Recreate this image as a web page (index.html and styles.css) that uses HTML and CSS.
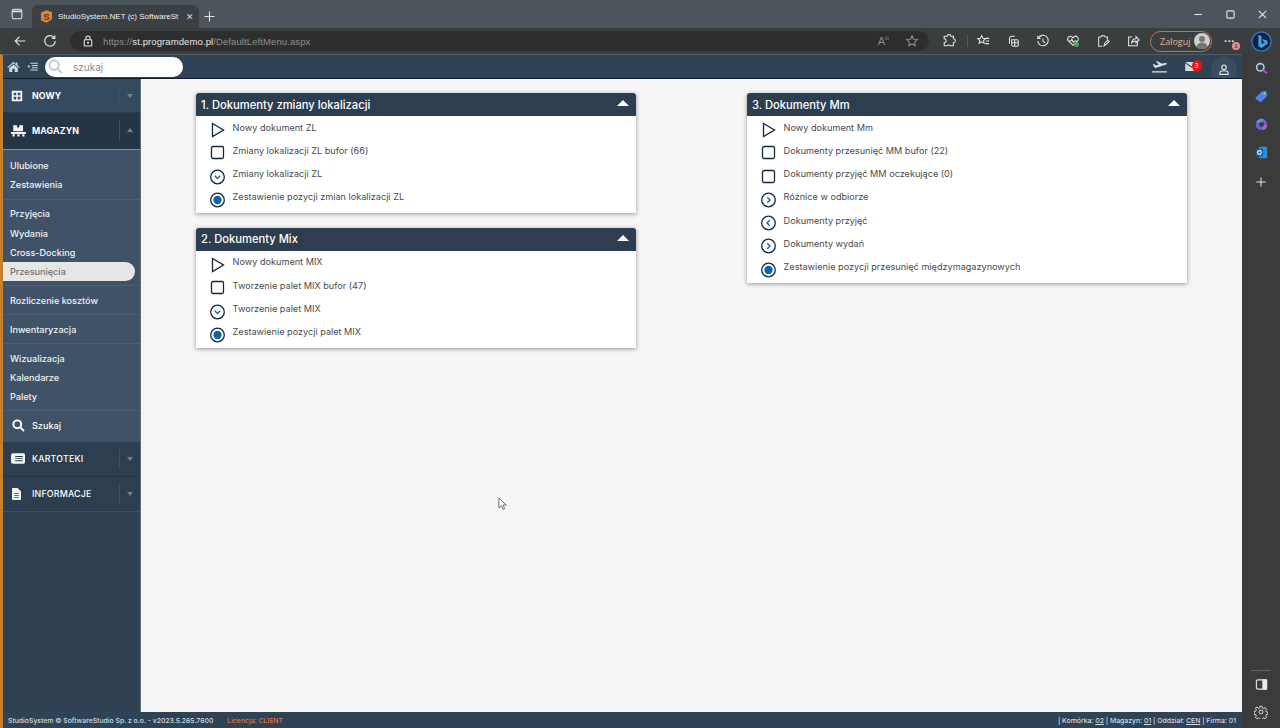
FILE: index.html
```html
<!DOCTYPE html>
<html lang="pl">
<head>
<meta charset="utf-8">
<title>StudioSystem.NET</title>
<link rel="stylesheet" href="styles.css">
</head>
<body>
<div class="tabstrip">
  <svg class="ic tabside" viewBox="0 0 16 16"><rect x="2.500" y="2.500" width="11" height="11" rx="2"/><path class="tabtop" d="M3 5h10"/></svg>
  <div class="tab">
    <svg class="favicon" viewBox="0 0 14 16"><path d="M7 0l7 2.500v9L7 16 0 13V3z" fill="#e8812c"/><text x="7" y="12.700" text-anchor="middle" class="favs">S</text></svg>
    <span class="tabtitle">StudioSystem.NET (c) SoftwareSt</span>
    <span class="tabx">✕</span>
  </div>
  <svg class="ic plus" viewBox="0 0 12 12"><path d="M6 .5v11M.5 6h11"/></svg>
  <div class="winctl">
    <svg class="ic wc" viewBox="0 0 12 12"><path d="M1.500 6h8"/></svg>
    <svg class="ic wc" viewBox="0 0 12 12"><rect x="2" y="2" width="8" height="8" rx="1.500"/></svg>
    <svg class="ic wc" viewBox="0 0 12 12"><path d="M2 2l8 8M10 2l-8 8"/></svg>
  </div>
</div>
<div class="toolbar">
  <svg class="ic nav" viewBox="0 0 16 16"><path d="M14 8H2.500M7.500 3l-5 5 5 5"/></svg>
  <svg class="ic nav reload" viewBox="0 0 16 16"><path d="M13 4.500A6 6 0 1 0 14 8M13.500 1.500v3.500H10"/></svg>
  <div class="urlbar">
    <svg class="lock" viewBox="0 0 12 14"><path d="M3.500 5.500V3.500a2.500 2.500 0 0 1 5 0v2" fill="none" stroke="#e8e8e8" stroke-width="1.300"/><rect x="1.500" y="5.500" width="9" height="7.500" rx="1" fill="none" stroke="#e8e8e8" stroke-width="1.300"/><rect x="4.800" y="8.300" width="2.400" height="1.800" fill="#e8e8e8"/></svg>
    <span class="url"><span class="dim">https://</span><b>st.programdemo.pl</b><span class="dim">/DefaultLeftMenu.aspx</span></span>
    <span class="urlend">
      <span class="aa">A<sup>ᕱ</sup></span>
      <svg class="ic tool muted" viewBox="0 0 16 16"><path d="M8 2l1.800 3.900 4.200.5-3.100 2.900.8 4.200L8 11.400l-3.700 2.100.8-4.200L2 6.400l4.200-.5z"/></svg>
    </span>
  </div>
  <svg class="ic tool first" viewBox="0 0 16 16"><path d="M6 2.500a2 2 0 0 1 4 0h3v3a2 2 0 0 1 0 4.500v3.500H9.500a2 2 0 0 0-3.500 0H2.500V10a2 2 0 0 0 0-4.500v-3z"/></svg>
  <span class="tooldiv"></span>
  <svg class="ic tool" viewBox="0 0 16 16"><path d="M6.500 2l1.400 3 3.100.4-2.300 2.100.6 3.100-2.800-1.600-2.800 1.600.6-3.100L2 5.400 5.100 5zM11 5h4M11.500 8H15M10.500 11H15"/></svg>
  <svg class="ic tool" viewBox="0 0 16 16"><path d="M4 11V5a2.500 2.500 0 0 1 2.500-2.500H10M6.500 6.500h6a1.500 1.500 0 0 1 1.500 1.500v4.500a1.500 1.500 0 0 1-1.500 1.500h-4A2 2 0 0 1 6.500 12zM10 6.500V14M6.500 10H14"/></svg>
  <svg class="ic tool" viewBox="0 0 16 16"><path d="M2.500 5A6 6 0 1 1 2 8M2 2v3.200h3.200M8 5v3.500l2.500 1.500"/></svg>
  <svg class="ic tool" viewBox="0 0 16 16"><path d="M8 13L2.800 7.800a3 3 0 0 1 4.400-4.300L8 4.300l.8-.8a3 3 0 0 1 4.400 4.300zM3 8h2.500l1.200-2 1.600 3.500L9.500 8H12"/><circle class="okdot" cx="12" cy="12" r="2.800"/></svg>
  <svg class="ic tool" viewBox="0 0 16 16"><path d="M3 3.500h2.500l1-1.500h3l1 1.500H13v3M3 3.500V14h4M9 13.500l1-3 3.500-3.500 1.500 1.500-3.500 3.500z"/></svg>
  <svg class="ic tool" viewBox="0 0 16 16"><path d="M7 3.500H3v10h10V9.500M6.500 10c.5-3 2.500-4.500 5-4.500V3l3.500 3.700-3.500 3.300V8c-2 0-3.500.6-5 2z"/></svg>
  <div class="login"><span>Zaloguj</span><svg class="avatar" viewBox="0 0 16 16"><circle cx="8" cy="8" r="8" fill="#cfcfcf"/><circle cx="8" cy="6" r="3" fill="#777"/><path d="M2.500 14c.5-3.500 3-4.500 5.500-4.500s5 1 5.500 4.500a8 8 0 0 1-11 0z" fill="#777"/></svg></div>
  <div class="more"><span>···</span><i>1</i></div>
  <svg class="bing" viewBox="0 0 24 24"><circle cx="12" cy="12" r="11" fill="#10243f" stroke="#3a78c2" stroke-width="1.500"/><path d="M8.500 4.500l3.500 1.200v9.500l4-2.300-2-1-1.100-2.900 6 2.100v3.400L12 19.500l-3.500-2z" fill="#3fa3e8"/></svg>
</div>
<div class="frame">
  <div class="app">
    <header class="topbar">
      <svg class="homeic" viewBox="0 0 16 14"><path d="M8 1L0 8l1 1 7-6 7 6 1-1-3-2.600V2h-2v1.700zM2.500 9v5h4V10h3v4h4V9L8 4.300z"/></svg>
      <svg class="listic" viewBox="0 0 14 12"><path d="M4 1h10v1.400H4zM6 4h8v1.400H6zM6 7h8v1.400H6zM4 10h10v1.400H4zM0 5.700L3 3.500v4.400z"/></svg>
      <div class="search">
        <svg class="searchic" viewBox="0 0 16 16"><circle cx="6.500" cy="6.500" r="5"/><path d="M10.500 10.500l4.500 4.500"/></svg>
        <span>szukaj</span>
      </div>
      <div class="topright">
        <svg class="planeic" viewBox="0 0 16 13"><path d="M0 11.200h16v1.300H0zM2 6.200L.8 3.600l1.300-.3 2 1.500 3.200-.9L4 .6 5.700.2l5 2.700 3.100-.8c1-.2 2 .1 2.200.7.100.6-.5 1-1.400 1.300L3.500 7.500z"/></svg>
        <div class="mail"><svg class="mailic" viewBox="0 0 14 10"><path d="M0 0h14L7 5zM0 1.500V10h14V1.500L7 6.500z"/></svg><i>3</i></div>
        <div class="usercirc"><svg class="ic userm" viewBox="0 0 16 16"><circle cx="8" cy="5" r="3"/><path d="M2.500 14.500v-2c0-1.500 1.200-2.500 2.500-2.500h6c1.300 0 2.500 1 2.500 2.500v2z"/></svg></div>
      </div>
    </header>
    <div class="main">
      <nav class="sidebar">
        <div class="head">
          <svg class="hic" viewBox="0 0 16 16"><path fill-rule="evenodd" d="M2 1h12a1 1 0 0 1 1 1v12a1 1 0 0 1-1 1H2a1 1 0 0 1-1-1V2a1 1 0 0 1 1-1zm1.500 2.500v3.500h3.500V3.500zm5.500 0v3.500h3.500V3.500zM3.500 9v3.500h3.500V9zM9 9v3.500h3.500V9z"/></svg>
          <span class="hlabel">NOWY</span><span class="caret"><s class="down"></s></span>
        </div>
        <div class="head open">
          <svg class="hic wide" viewBox="0 0 20 16"><path d="M3 1h5v3h3V1h5v8H3zM0 10h20v2.500H0zM2 13h3v3H2zM8.500 13h3v3h-3zM15 13h3v3h-3z"/></svg>
          <span class="hlabel">MAGAZYN</span><span class="caret"><s class="up"></s></span>
        </div>
        <div class="group">
          <a>Ulubione</a><a>Zestawienia</a>
        </div>
        <div class="group">
          <a>Przyjęcia</a><a>Wydania</a><a>Cross-Docking</a><a class="active">Przesunięcia</a>
        </div>
        <div class="group"><a>Rozliczenie kosztów</a></div>
        <div class="group"><a>Inwentaryzacja</a></div>
        <div class="group"><a>Wizualizacja</a><a>Kalendarze</a><a>Palety</a></div>
        <div class="find">
          <svg class="findic" viewBox="0 0 16 16"><circle cx="6.500" cy="6.500" r="4.800"/><path d="M10.500 10.500l4.300 4.300"/></svg>
          <span>Szukaj</span>
        </div>
        <div class="head dark">
          <svg class="hic wide kart" viewBox="0 0 20 15"><path fill-rule="evenodd" d="M3 0h15a2 2 0 0 1 2 2v11a2 2 0 0 1-2 2H3a3 3 0 0 1-3-3V3a3 3 0 0 1 3-3zm3 4v1.300h11V4zm0 3v1.300h11V7zm0 3v1.300h11V10z"/></svg>
          <span class="hlabel reg">KARTOTEKI</span><span class="caret"><s class="down"></s></span>
        </div>
        <div class="head dark">
          <svg class="hic doc" viewBox="0 0 12 16"><path fill-rule="evenodd" d="M0 1a1 1 0 0 1 1-1h6.500L12 4.500V15a1 1 0 0 1-1 1H1a1 1 0 0 1-1-1zm3 6v1h6V7zm0 2.500v1h6v-1zm0 2.500v1h6v-1z"/></svg>
          <span class="hlabel reg">INFORMACJE</span><span class="caret"><s class="down"></s></span>
        </div>
      </nav>
      <main class="content">
        <div class="col">
          <section class="panel">
            <h2><span>1. Dokumenty zmiany lokalizacji</span><s class="tri"></s></h2>
            <ul>
              <li><svg class="pi" viewBox="0 0 16 16"><path d="M2.500 1.500L13.500 8 2.500 14.500z"/></svg>Nowy dokument ZL</li>
              <li><svg class="pi" viewBox="0 0 16 16"><rect x="1.500" y="1.500" width="12" height="12" rx="1.500"/></svg>Zmiany lokalizacji ZL bufor (66)</li>
              <li><svg class="pi" viewBox="0 0 16 16"><circle cx="7.500" cy="8" r="6.800"/><path class="blue" d="M4.800 6.800l2.700 2.700 2.700-2.700"/></svg>Zmiany lokalizacji ZL</li>
              <li><svg class="pi" viewBox="0 0 16 16"><circle cx="7.500" cy="8" r="6.800"/><circle class="dot" cx="7.500" cy="8" r="4.200"/></svg>Zestawienie pozycji zmian lokalizacji ZL</li>
            </ul>
          </section>
          <section class="panel">
            <h2><span>2. Dokumenty Mix</span><s class="tri"></s></h2>
            <ul>
              <li><svg class="pi" viewBox="0 0 16 16"><path d="M2.500 1.500L13.500 8 2.500 14.500z"/></svg>Nowy dokument MIX</li>
              <li><svg class="pi" viewBox="0 0 16 16"><rect x="1.500" y="1.500" width="12" height="12" rx="1.500"/></svg>Tworzenie palet MIX bufor (47)</li>
              <li><svg class="pi" viewBox="0 0 16 16"><circle cx="7.500" cy="8" r="6.800"/><path class="blue" d="M4.800 6.800l2.700 2.700 2.700-2.700"/></svg>Tworzenie palet MIX</li>
              <li><svg class="pi" viewBox="0 0 16 16"><circle cx="7.500" cy="8" r="6.800"/><circle class="dot" cx="7.500" cy="8" r="4.200"/></svg>Zestawienie pozycji palet MIX</li>
            </ul>
          </section>
        </div>
        <div class="col">
          <section class="panel">
            <h2><span>3. Dokumenty Mm</span><s class="tri"></s></h2>
            <ul>
              <li><svg class="pi" viewBox="0 0 16 16"><path d="M2.500 1.500L13.500 8 2.500 14.500z"/></svg>Nowy dokument Mm</li>
              <li><svg class="pi" viewBox="0 0 16 16"><rect x="1.500" y="1.500" width="12" height="12" rx="1.500"/></svg>Dokumenty przesunięć MM bufor (22)</li>
              <li><svg class="pi" viewBox="0 0 16 16"><rect x="1.500" y="1.500" width="12" height="12" rx="1.500"/></svg>Dokumenty przyjęć MM oczekujące (0)</li>
              <li><svg class="pi" viewBox="0 0 16 16"><circle cx="7.500" cy="8" r="6.800"/><path class="blue" d="M6.300 5.300L9 8l-2.700 2.700"/></svg>Różnice w odbiorze</li>
              <li><svg class="pi" viewBox="0 0 16 16"><circle cx="7.500" cy="8" r="6.800"/><path class="blue" d="M8.700 5.300L6 8l2.700 2.700"/></svg>Dokumenty przyjęć</li>
              <li><svg class="pi" viewBox="0 0 16 16"><circle cx="7.500" cy="8" r="6.800"/><path class="blue" d="M6.300 5.300L9 8l-2.700 2.700"/></svg>Dokumenty wydań</li>
              <li><svg class="pi" viewBox="0 0 16 16"><circle cx="7.500" cy="8" r="6.800"/><circle class="dot" cx="7.500" cy="8" r="4.200"/></svg>Zestawienie pozycji przesunięć międzymagazynowych</li>
            </ul>
          </section>
        </div>
        <svg class="cursor" viewBox="0 0 12 16"><path d="M1 1v11.500l3-2.500 2 4.500 2-1-2-4.300h4z"/></svg>
      </main>
    </div>
    <footer class="status">
      <span class="copy">StudioSystem © SoftwareStudio Sp. z o.o. - v2023.5.265.7600</span>
      <span class="lic">Licencja: CLIENT</span>
      <span class="info">| Komórka: <u>02</u> | Magazyn: <u>01</u> | Oddział: <u>CEN</u> | Firma: 01</span>
    </footer>
  </div>
  <aside class="edge">
    <svg class="eic" viewBox="0 0 16 16"><circle cx="6.500" cy="6.500" r="4.500" fill="none" stroke="#a9cbe6" stroke-width="2"/><path d="M10 10l5 4" stroke="#a24fc4" stroke-width="2.500" fill="none"/></svg>
    <svg class="eic" viewBox="0 0 16 16"><path d="M1 9l7-7 6-1 1 6-7 7.500a1.500 1.500 0 0 1-2 0L1 11a1.500 1.500 0 0 1 0-2z" fill="#4d82e8"/><circle cx="11.500" cy="4.500" r="1.300" fill="#d9c27a"/></svg>
    <svg class="eic" viewBox="0 0 16 16"><circle cx="8" cy="8" r="7" fill="#6d5fd6"/><path d="M1.500 5a7 7 0 0 1 9-3.500L8 8z" fill="#4f9be8"/><path d="M10 15a7 7 0 0 0 5-6L9 9z" fill="#c25bc4"/><circle cx="8" cy="8" r="3" fill="#3b3b3b"/></svg>
    <svg class="eic" viewBox="0 0 16 16"><rect x="5" y="1" width="10" height="14" rx="1" fill="#2b8fd8"/><rect x="1" y="3.500" width="9" height="9" rx="1" fill="#0f62ab"/><circle cx="5.500" cy="8" r="2.300" fill="none" stroke="#fff" stroke-width="1.300"/></svg>
    <svg class="ic eplus" viewBox="0 0 12 12"><path d="M6 .5v11M.5 6h11"/></svg>
    <span class="espace"></span>
    <span class="erule"></span>
    <svg class="ic eside" viewBox="0 0 14 14"><rect x="1.500" y="2" width="11" height="10" rx="1.500"/><rect class="fillw" x="8.500" y="2" width="4" height="10"/></svg>
    <svg class="ic egear" viewBox="0 0 16 16"><circle cx="8" cy="8" r="2.300"/><path d="M6.800 1h2.400l.4 2 1.400.6 1.700-1.100 1.700 1.700-1.100 1.700.6 1.400 2 .4v2.400l-2 .4-.6 1.400 1.100 1.700-1.700 1.700-1.700-1.100-1.400.6-.4 2H6.800l-.4-2-1.400-.6-1.700 1.100-1.700-1.700 1.100-1.700-.6-1.400-2-.4V6.800l2-.4.6-1.400-1.100-1.700 1.700-1.700L5 3.600l1.400-.6z" transform="translate(0 .5)"/></svg>
  </aside>
</div>
</body>
</html>
```

FILE: styles.css
```css
* { box-sizing: border-box; }
html, body { margin: 0; height: 100%; overflow: hidden; }
body {
  width: 1280px; height: 728px;
  display: flex; flex-direction: column;
  font-family: Inter, "Open Sans", sans-serif;
  background: #3b3b3b;
  color: #333;
}
.ic { fill: none; stroke: #e4e6e7; stroke-width: 1.2; flex: none; }
s { text-decoration: none; display: block; }

/* browser tabs */
.tabstrip {
  height: 28px; flex: none;
  display: flex; align-items: flex-end;
  background: #4c555b;
  padding-left: 10px;
}
.tabside { width: 14px; height: 14px; margin: 0 8px 7px 0; }
.tabtop { stroke-width: 2; }
.tab {
  width: 167px; height: 23px;
  background: #3b4045;
  border-radius: 6px 6px 0 0;
  display: flex; align-items: center;
  padding: 0 7px 0 9px;
  color: #eee; font-size: 8px; font-family: "Liberation Sans", sans-serif;
}
.favicon { width: 11px; height: 13px; margin-right: 6px; flex: none; }
.favs { font: 700 12px "Liberation Sans", sans-serif; fill: #3b4045; }
.tabtitle { flex: 1; white-space: nowrap; }
.tabx { font-size: 9px; margin-left: 8px; color: #ddd; }
.plus { width: 11px; height: 11px; margin: 0 0 6px 5px; }
.winctl { margin-left: auto; display: flex; gap: 21px; padding: 0 12px 8px 0; align-items: center; }
.wc { width: 11px; height: 11px; }

/* browser toolbar */
.toolbar {
  height: 26px; flex: none;
  display: flex; align-items: center;
  background: #3b3e3f;
  padding-left: 13px;
}
.nav { width: 14px; height: 14px; stroke-width: 1.300; }
.reload { margin-left: 16px; }
.urlbar {
  width: 859px; height: 20px;
  margin-left: 13px;
  display: flex; align-items: center;
  background: #2e2e2e;
  border-radius: 10px;
  padding-left: 13px;
}
.lock { width: 10px; height: 12px; margin-right: 10px; flex: none; }
.url { font: 9.500px "Liberation Sans", sans-serif; color: #e8e8e8; letter-spacing: .1px; }
.url b { font-weight: 400; color: #e6e6e6; }
.dim { color: #8f8f8f; }
.urlend { margin-left: auto; display: flex; gap: 16px; align-items: center; padding-right: 10px; }
.aa { font: 11px "Liberation Sans", sans-serif; color: #8a8a8a; }
.aa sup { font-size: 5px; }
.tool { width: 14px; height: 14px; margin-left: 16px; }
.tool.muted { margin-left: 0; stroke: #909090; }
.tool.first { margin-left: 13px; }
.tooldiv { width: 1px; height: 12px; background: #5c5c5c; margin: 0 -8px 0 11px; }
.okdot { fill: #4caf50; stroke: none; }
.login {
  width: 62px; height: 21px;
  margin-left: 10px;
  display: flex; align-items: center; justify-content: space-between;
  border: 1px solid #b07c56;
  border-radius: 11px;
  padding: 0 1px 0 9px;
  color: #e3b48f; font: 9px "Open Sans", sans-serif;
}
.avatar { width: 16px; height: 16px; }
.more { position: relative; width: 20px; margin-left: 12px; color: #eee; font: 700 11px "Liberation Sans", sans-serif; line-height: 8px; }
.more i {
  position: absolute; left: 8px; top: 5px;
  width: 8px; height: 8px; border-radius: 50%;
  background: #e8908c; color: #3b3b3b;
  font: 700 6px/8px "Liberation Sans", sans-serif; text-align: center;
}
.bing { width: 21px; height: 21px; margin-left: 7px; }

/* application frame */
.frame { flex: 1; display: flex; min-height: 0; }
.app {
  flex: 1; min-width: 0;
  display: flex; flex-direction: column;
  background: #2d4052;
  border-left: 3px solid #c5812c;
  border-top: 1px solid #555c60;
}
.topbar {
  height: 24px; flex: none;
  display: flex; align-items: center;
  background: #2f4357;
  border-bottom: 1px solid #101c28;
  padding-left: 4px;
  overflow: hidden;
}
.homeic { width: 13px; height: 11px; fill: #d4d8dc; flex: none; }
.listic { width: 11px; height: 9px; fill: #d4d8dc; margin-left: 7px; flex: none; }
.search {
  width: 138px; height: 20px;
  margin-left: 7px;
  background: #fff;
  border-radius: 10px;
  display: flex; align-items: center;
  padding-left: 3px;
  color: #8c8c8c; font-size: 10px;
}
.searchic { width: 15px; height: 15px; fill: none; stroke: #c2c2c2; stroke-width: 1.800; margin-right: 10px; }
.topright { margin-left: auto; display: flex; align-items: center; }
.planeic { width: 15px; height: 12px; fill: #e0e3e6; }
.mail { position: relative; margin-left: 18px; height: 10px; display: flex; }
.mailic { width: 13px; height: 9px; fill: #d6dade; }
.mail i {
  position: absolute; left: 6.500px; top: -2px;
  width: 10px; height: 12px; border-radius: 50%;
  background: #ee1111; color: #fff;
  font: 7px/12px "Liberation Sans", sans-serif; text-align: center;
}
.usercirc {
  width: 26px; height: 26px; border-radius: 50%;
  margin: 6px 5px 0 13px;
  background: #3b4e61;
  display: flex; align-items: center; justify-content: center;
}
.userm { width: 12px; height: 13px; stroke-width: 1.500; }

.main { flex: 1; min-height: 0; display: flex; }

/* sidebar */
.sidebar {
  width: 138px; flex: none;
  background: #2e4052;
  border-right: 1px solid #5f6e7c;
  color: #fff;
  display: flex; flex-direction: column;
}
.head {
  height: 34px; flex: none;
  display: flex; align-items: center;
  background: #344a5e;
  border-bottom: 1px solid #2b3c4c;
  padding-left: 8px;
  position: relative;
}
.head.open {
  height: 37px;
  padding-bottom: 2px;
  background: #243546;
  border-bottom: 1px solid #c5812c;
}
.head.dark {
  height: 35px;
  padding-bottom: 1px;
  background: #2c3e4f;
  border-bottom: 1px solid #25343f;
}
.head.dark + .head.dark { border-bottom: 1px solid #3c4f61; }
.hic { width: 12px; height: 12px; fill: #f4f5f6; flex: none; margin-right: 9px; }
.hic.wide { width: 15px; height: 13px; margin: 0 6px 0 0; }
.hic.kart { width: 14px; height: 11px; margin-right: 7px; }
.hic.doc { width: 9px; height: 12px; margin: 0 11px 0 1px; }
.hlabel { font-size: 8.800px; font-weight: 700; letter-spacing: .1px; }
.hlabel.reg { font-weight: 500; letter-spacing: .2px; }
.caret {
  position: absolute; right: 0; top: 7px;
  width: 21px; height: 20px;
  border-left: 1px solid #3d5164;
  display: flex; align-items: center; justify-content: center;
}
.down { border-left: 3.500px solid transparent; border-right: 3.500px solid transparent; border-top: 4px solid #74818d; }
.up { border-left: 3.500px solid transparent; border-right: 3.500px solid transparent; border-bottom: 4px solid #74818d; }
.group {
  background: #3f5267;
  border-bottom: 1px solid #4d5f72;
  padding: 4.500px 5px 4px 0;
  display: flex; flex-direction: column;
}
.head.open + .group { padding-top: 6px; }
.group a {
  height: 19.300px; flex: none;
  display: flex; align-items: center;
  padding-left: 7px;
  font-size: 9.100px; font-weight: 500;
  color: #f2f4f5;
  white-space: nowrap;
}
.group a.active {
  background: #e6e6e6;
  color: #707070;
  border-radius: 0 10px 10px 0;
}
.find {
  height: 31px; flex: none;
  display: flex; align-items: center;
  background: #3f5267;
  padding: 0 0 2px 9px;
  font-size: 9.100px; font-weight: 500;
}
.findic { width: 13px; height: 13px; fill: none; stroke: #fff; stroke-width: 2.400; margin-right: 7px; }

/* content */
.content {
  flex: 1; min-width: 0;
  position: relative;
  background: #f5f5f5;
  padding: 14px 0 0 55px;
  display: flex; gap: 111px;
  align-items: flex-start;
}
.col { width: 440px; display: flex; flex-direction: column; gap: 14.800px; }
.panel {
  background: #fff;
  border-radius: 3px 3px 0 0;
  box-shadow: 0 1px 4px rgba(0, 0, 0, .4);
}
.panel h2 {
  margin: 0; height: 23px;
  display: flex; align-items: center; justify-content: space-between;
  background: #2c3e50;
  border-radius: 3px 3px 0 0;
  padding: 0 7px 0 5px;
  color: #fff;
  font-size: 11.200px; font-weight: 500;
}
.tri { border-left: 6px solid transparent; border-right: 6px solid transparent; border-bottom: 6px solid #fff; margin-bottom: 3px; }
.panel ul { list-style: none; margin: 0; padding: 3px 0 1px; }
.panel li {
  height: 23.300px;
  display: flex; align-items: flex-start;
  padding: 2.500px 0 0 14px;
  font-size: 9.150px; line-height: 11px;
  color: #4a4a4a;
  white-space: nowrap;
}
.pi {
  width: 16px; height: 16px;
  margin: .5px 6.600px 0 0;
  fill: none; stroke: #12283e; stroke-width: 1.300;
  flex: none;
}
.pi .blue { stroke: #1565a8; stroke-width: 1.400; }
.pi .dot { fill: #0e63ad; stroke: none; }
.cursor { position: absolute; left: 357px; top: 418px; width: 10px; height: 14px; fill: #fff; stroke: #444; stroke-width: .9; }

/* status bar */
.status {
  height: 16px; flex: none;
  display: flex; align-items: center;
  background: #2f4357;
  padding: 0 6px 0 5px;
  font-size: 6.850px; font-weight: 500;
  color: #d5dbe1;
  white-space: nowrap;
}
.lic { margin-left: 14px; color: #d97b3c; }
.info { margin-left: auto; }

/* browser edge rail */
.edge {
  width: 38px; flex: none;
  display: flex; flex-direction: column; align-items: center;
  background: #3b3b3b;
  padding-top: 8px;
}
.eic { width: 13px; height: 13px; margin-bottom: 15px; }
.eplus { width: 10px; height: 10px; margin-top: 3px; }
.espace { flex: 1; }
.erule { width: 20px; height: 1px; background: #666; margin-bottom: 7px; }
.eside { width: 13px; height: 13px; margin-bottom: 14px; }
.egear { width: 14px; height: 14px; margin-bottom: 9px; stroke-width: 1.100; }
.fillw { fill: #eee; }
```
